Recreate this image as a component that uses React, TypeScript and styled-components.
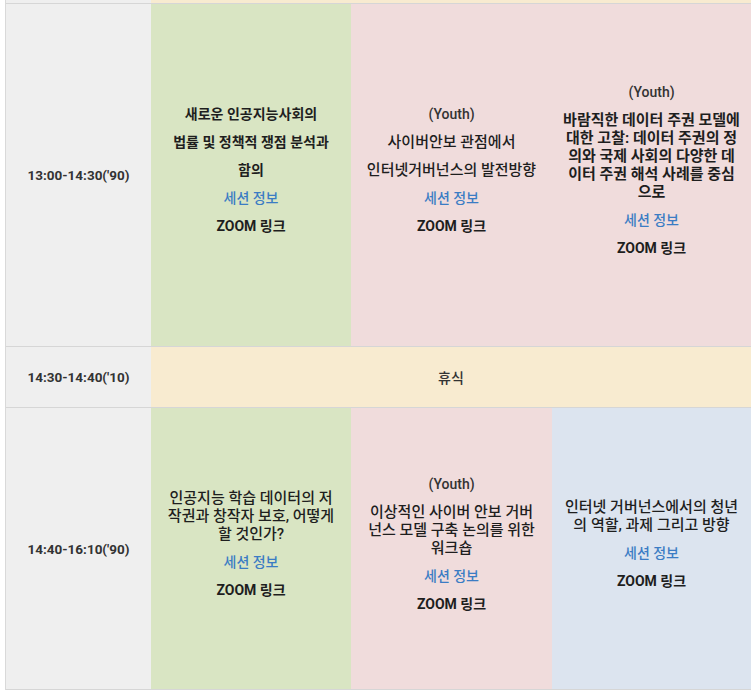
import { Fragment } from "react";
import styled, { createGlobalStyle } from "styled-components";

const GlobalStyle = createGlobalStyle`
  body {
    margin: 0;
    background: #ffffff;
    font-family: Roboto, "Noto Sans CJK KR", sans-serif;
    color: #222222;
  }
`;

type Tone = "gray" | "green" | "pink" | "blue" | "yellow";

const tones: Record<Tone, string> = {
  gray: "#efefef",
  green: "#d9e5c3",
  pink: "#f0dcdc",
  blue: "#dce4ef",
  yellow: "#f8ebd0",
};

type Kind = "lead" | "title" | "bold" | "link" | "zoom" | "tag";
type Line = { text: string; kind?: Kind };
type Session = { tone: Tone; lines: Line[] };
type Row = { time: string; height: number; sessions?: Session[]; note?: string };

const info: Line = { text: "세션 정보", kind: "link" };
const zoom: Line = { text: "ZOOM 링크", kind: "zoom" };
const youth: Line = { text: "(Youth)", kind: "tag" };

// line breaks follow the original table's wrapping
const rows: Row[] = [
  {
    time: "13:00-14:30('90)",
    height: 342,
    sessions: [
      {
        tone: "green",
        lines: [
          { text: "새로운 인공지능사회의", kind: "lead" },
          { text: "법률 및 정책적 쟁점 분석과", kind: "lead" },
          { text: "함의", kind: "lead" },
          info,
          zoom,
        ],
      },
      {
        tone: "pink",
        lines: [youth, { text: "사이버안보 관점에서" }, { text: "인터넷거버넌스의 발전방향" }, info, zoom],
      },
      {
        tone: "pink",
        lines: [
          youth,
          {
            text: "바람직한 데이터 주권 모델에\n대한 고찰: 데이터 주권의 정\n의와 국제 사회의 다양한 데\n이터 주권 해석 사례를 중심\n으로",
            kind: "bold",
          },
          info,
          zoom,
        ],
      },
    ],
  },
  { time: "14:30-14:40('10)", height: 60, note: "휴식" },
  {
    time: "14:40-16:10('90)",
    height: 281,
    sessions: [
      {
        tone: "green",
        lines: [{ text: "인공지능 학습 데이터의 저\n작권과 창작자 보호, 어떻게\n할 것인가?" }, info, zoom],
      },
      {
        tone: "pink",
        lines: [youth, { text: "이상적인 사이버 안보 거버\n넌스 모델 구축 논의를 위한\n워크숍" }, info, zoom],
      },
      {
        tone: "blue",
        lines: [{ text: "인터넷 거버넌스에서의 청년\n의 역할, 과제 그리고 방향" }, info, zoom],
      },
    ],
  },
];

const Page = styled.div`
  padding: 0 1px 0 5px;
`;

const Table = styled.div`
  display: grid;
  grid-template-columns: 145px 200px 201px 199px;
  border-left: 1px solid #d9d9d9;
`;

const Strip = styled.div<{ $tone: Tone }>`
  height: 3px;
  background: ${(p) => tones[p.$tone]};
  border-bottom: 1px solid #d6d6d6;
`;

const Cell = styled.div<{ $tone: Tone; $height: number; $span?: number }>`
  grid-column: span ${(p) => p.$span ?? 1};
  height: ${(p) => p.$height}px;
  background: ${(p) => tones[p.$tone]};
  border-bottom: 1px solid #d6d6d6;
  display: flex;
  flex-direction: column;
  justify-content: center;
  align-items: center;
  padding: 0 6px;
  text-align: center;
`;

const TimeLabel = styled.div`
  font-size: 13.5px;
  font-weight: 700;
  color: #333333;
`;

const Note = styled.div`
  font-size: 14px;
  font-weight: 500;
  color: #333333;
`;

const sizes: Record<Kind, number> = {
  lead: 14,
  title: 15,
  bold: 15,
  link: 14,
  zoom: 14,
  tag: 14,
};

const Text = styled.p<{ $kind: Kind }>`
  margin: 0 0 10px;
  white-space: pre-line;
  font-size: ${(p) => sizes[p.$kind]}px;
  line-height: 18px;
  font-weight: ${(p) => (p.$kind === "lead" || p.$kind === "bold" || p.$kind === "zoom" ? 700 : 500)};
  color: ${(p) => (p.$kind === "link" ? "#3b7cc4" : p.$kind === "tag" ? "#333333" : "#1e1e1e")};
`;

export default function App() {
  return (
    <>
      <GlobalStyle />
      <Page>
        <Table>
          <Strip $tone="gray" />
          <Strip $tone="yellow" />
          <Strip $tone="yellow" />
          <Strip $tone="yellow" />
          {rows.map((row) => (
            <Fragment key={row.time}>
              <Cell $tone="gray" $height={row.height}>
                <TimeLabel>{row.time}</TimeLabel>
              </Cell>
              {row.note ? (
                <Cell $tone="yellow" $height={row.height} $span={3}>
                  <Note>{row.note}</Note>
                </Cell>
              ) : (
                row.sessions?.map((s, i) => (
                  <Cell key={i} $tone={s.tone} $height={row.height}>
                    {s.lines.map((l, j) => (
                      <Text key={j} $kind={l.kind ?? "title"}>
                        {l.text}
                      </Text>
                    ))}
                  </Cell>
                ))
              )}
            </Fragment>
          ))}
        </Table>
      </Page>
    </>
  );
}
